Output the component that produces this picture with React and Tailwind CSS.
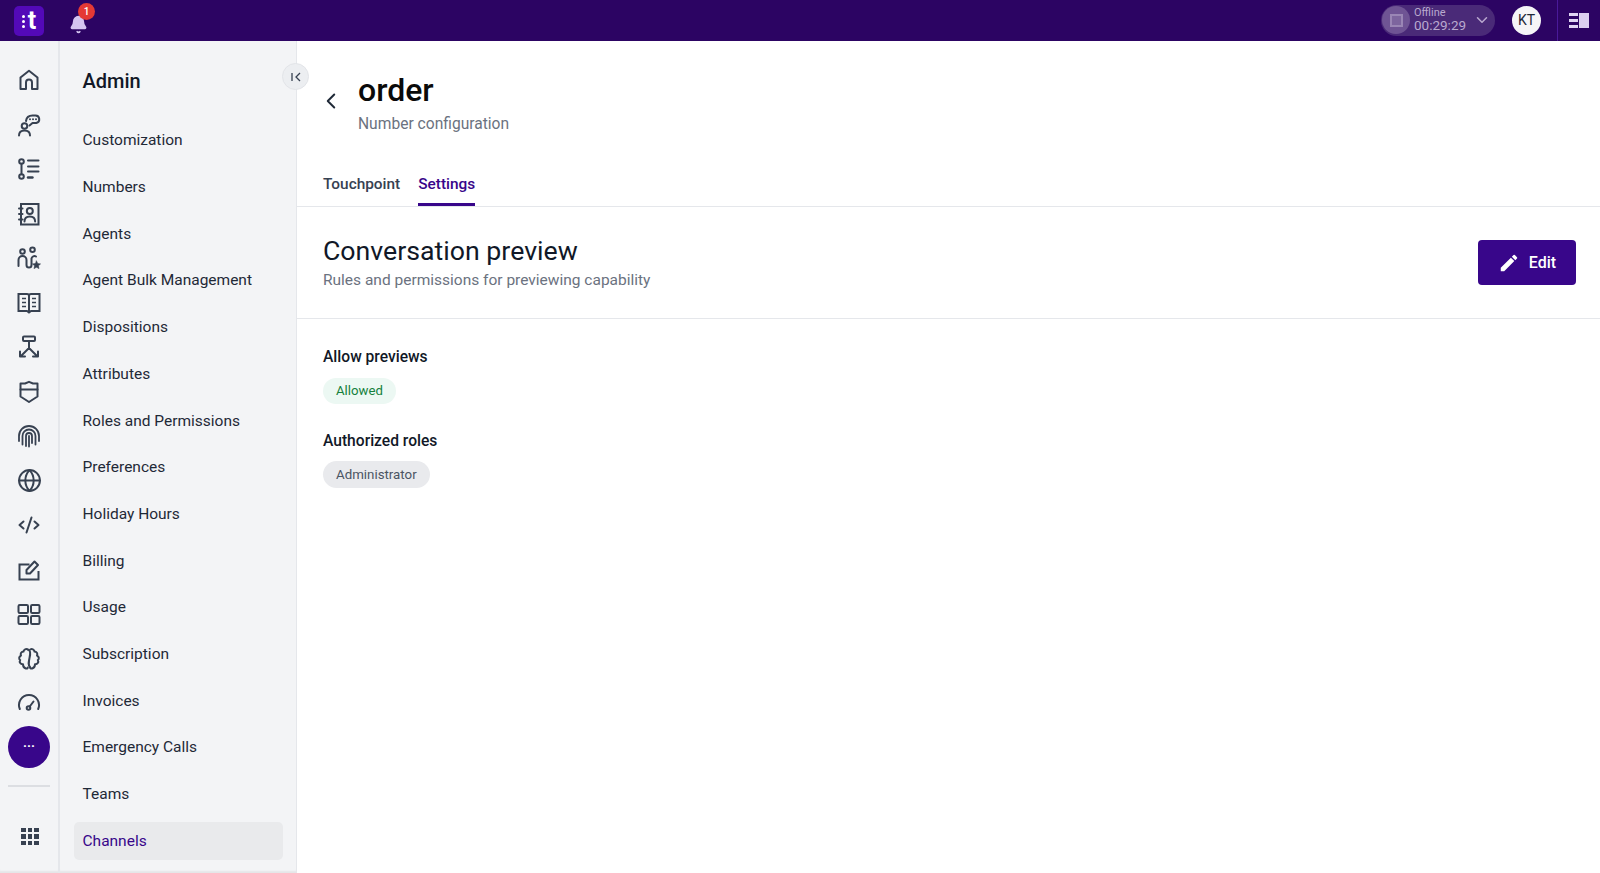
import React from 'react';
import { ChevronLeft, ChevronDown, Globe, Bell } from 'lucide-react';

const adminItems = [
  'Customization', 'Numbers', 'Agents', 'Agent Bulk Management', 'Dispositions', 'Attributes',
  'Roles and Permissions', 'Preferences', 'Holiday Hours', 'Billing', 'Usage', 'Subscription',
  'Invoices', 'Emergency Calls', 'Teams', 'Channels'
];

const Svg = ({ children }) => (
  <svg width="24" height="24" viewBox="0 0 24 24" fill="none" stroke="#374151" strokeWidth="2" strokeLinecap="round" strokeLinejoin="round">
    {children}
  </svg>
);

const railIcons = [
  <Svg key="home"><path d="M3.500 21V9.500L12 2.800l8.500 6.700V21h-5.500v-6.500a3 3 0 0 0-6 0V21z" /></Svg>,
  <Svg key="talk">
    <circle cx="7.500" cy="13" r="2.800" />
    <path d="M2 22.500c0-3.300 2.400-5 5.500-5s5.500 1.700 5.500 5" />
    <path d="M9 8C9.500 4.500 12 2.500 15.500 2.500H18.500a3.800 3.800 0 0 1 .8 7.500H15.500l-3 2.500" />
    <path d="M13 6.300h.01M16 6.300h.01M19 6.300h.01" />
  </Svg>,
  <Svg key="steps">
    <circle cx="4.500" cy="4.500" r="2.300" />
    <circle cx="4.500" cy="19.500" r="2.300" />
    <path d="M4.500 6.800v10.400M11 3.500h10.500M11 9.500h10.500M11 14.500h10.500" />
    <path d="M11 20.500h4.500" strokeWidth="2.400" />
  </Svg>,
  <Svg key="contacts">
    <path d="M4 2h17.500v20.500H4z" strokeLinejoin="miter" />
    <circle cx="12.800" cy="9" r="3" />
    <path d="M7.500 19.500c0-3.500 2.300-5 5.300-5s5.300 1.500 5.300 5M2 6.500h3.500M2 12h3.500M2 17.500h3.500" />
  </Svg>,
  <Svg key="agents">
    <circle cx="5.500" cy="5.500" r="2.300" />
    <circle cx="15.500" cy="3.800" r="2.300" />
    <path d="M1.500 20v-6a4 4 0 0 1 8 0v5a2.500 2.500 0 0 0 5 0v-6.500a3 3 0 0 1 4.500-2" />
    <path d="M19.500 15l1.200 2.600 2.800.3-2.100 1.900.6 2.800-2.500-1.400-2.500 1.400.6-2.800-2.100-1.900 2.800-.3z" fill="#374151" strokeWidth="0.6" />
  </Svg>,
  <Svg key="book">
    <path d="M1.500 3h8.500a2 2 0 0 1 2 1.500A2 2 0 0 1 14 3h8.500v17H14l-2 1.500-2-1.500H1.500zM12 4.500V20" strokeLinejoin="miter" />
    <path d="M5 7.500h4M5 11.500h4M5 15.500h4M15 7.500h4M15 11.500h4M15 15.500h4" strokeWidth="1.500" strokeLinecap="butt" />
  </Svg>,
  <Svg key="route">
    <rect x="6" y="1.500" width="12" height="4.500" rx="1" />
    <path d="M12 6v7l-8.500 8.500M12 13l8.500 8.500M3 16.500v5h5M21 16.500v5h-5" />
  </Svg>,
  <Svg key="shield">
    <path d="M3.500 3.500H8L12 1.800 16 3.500h4.500V16.500L12 22l-8.500-5.500z" />
    <path d="M3.500 9.500H20.500" />
  </Svg>,
  <Svg key="finger">
    <path d="M2 17v-5a10 10 0 0 1 20 0v5" strokeWidth="1.800" />
    <path d="M5.500 20.500V12a6.500 6.500 0 0 1 13 0v8.500" strokeWidth="1.800" />
    <path d="M9 22v-10a3 3 0 0 1 6 0v7" strokeWidth="1.800" />
    <path d="M12 12v10.500" strokeWidth="1.800" />
  </Svg>,
  <Globe key="globe" size={25} color="#374151" strokeWidth={1.900} />,
  <Svg key="code"><path d="M6.500 8.500 2.500 12l4 3.500M17.500 8.500l4 3.500-4 3.500M14.500 4.500l-5 15" /></Svg>,
  <Svg key="edit">
    <path d="M21.500 13v8.500h-19V6.500h10" strokeLinecap="butt" strokeLinejoin="miter" />
    <path d="M9.500 15.500v-3.500l8-8.500 3.500 3.500-8 8.500z" />
  </Svg>,
  <Svg key="apps">
    <rect x="1.500" y="3" width="9.500" height="8" rx="1.200" />
    <rect x="14" y="3" width="8.500" height="8" rx="1.200" />
    <rect x="1.500" y="14" width="9.500" height="8" rx="1.200" />
    <rect x="14" y="14" width="8.500" height="8" rx="1.200" />
  </Svg>,
  <Svg key="brain">
    <path d="M10.800 2.500C9 1.500 6.800 2.500 6.500 4.500 4.500 4.500 3 6.500 4 8.500 2 9.500 1.500 12 3.200 13 2 15 3.500 17.500 6 17.200c0 2 1 3.800 2.800 4.300 1 .2 2 0 2-1" />
    <path d="M13.200 2.500C15 1.500 17.200 2.500 17.500 4.500 19.500 4.500 21 6.500 20 8.500 22 9.500 22.500 12 20.800 13 22 15 20.500 17.500 18 17.200c0 2-1 3.800-2.800 4.300-1 .2-2 0-2-1" />
    <path d="M10.800 2.500c2.400.5 3 3 1.700 8.500-1 4.500-1.600 7 .7 9.500" />
  </Svg>,
  <Svg key="gauge">
    <path d="M2.800 18A10 10 0 1 1 21.200 18" />
    <circle cx="11.500" cy="17" r="1.800" />
    <path d="M12.700 15.500 16.500 10.500" />
  </Svg>,
];

export default function App() {
  return (
    <div className="flex h-[873px] flex-col overflow-hidden bg-white font-['Roboto',sans-serif]">
      <header className="flex h-[41px] shrink-0 items-center bg-[#2c0463]">
        <div className="ml-[14px] flex h-[30px] w-[30px] items-center justify-center rounded-[5px] bg-[#5309b8] pb-[1px] text-[25px] font-bold leading-none text-white">
          <span className="mr-[3px] flex flex-col gap-[2px] pt-[3px]">
            <i className="block h-[3px] w-[3px] rounded-full bg-white" />
            <i className="block h-[3px] w-[3px] rounded-full bg-white" />
            <i className="block h-[3px] w-[3px] rounded-full bg-white" />
          </span>
          t
        </div>
        <div className="relative ml-[25px] h-[24px] w-[20px]">
          <Bell size={19} fill="#d5c5f0" color="#d5c5f0" className="mt-[6px]" />
          <span className="absolute -top-[6px] left-[9px] flex h-[17px] w-[17px] items-center justify-center rounded-full bg-[#e53935] text-[10px] font-medium text-white">1</span>
        </div>
        <div className="ml-auto flex h-[31px] w-[114px] items-center rounded-full bg-[#4a2a78] pb-[1px] pl-[1px]">
          <div className="flex h-[28px] w-[28px] items-center justify-center rounded-full bg-[#6f5494]">
            <div className="h-[13px] w-[13px] border-2 border-[#9a86b5] bg-[#7d659e]" />
          </div>
          <div className="ml-[4px] flex flex-col pb-[1px] text-[#b9a9cf]">
            <span className="text-[11px] leading-[11px]">Offline</span>
            <span className="text-[13.500px] leading-[15px]">00:29:29</span>
          </div>
          <ChevronDown size={18} color="#b9a9cf" className="ml-[7px]" />
        </div>
        <div className="ml-[17px] flex h-[29px] w-[29px] items-center justify-center rounded-full bg-[#f5f5f7] pb-[1px] text-[14px] text-[#1f2937]">KT</div>
        <div className="ml-[16px] flex h-[41px] w-[43px] items-center justify-center border-l border-[#4a1a99]">
          <div className="flex items-center gap-[1px] pr-[1px]">
            <div className="flex h-[15px] w-[9px] flex-col justify-between">
              <i className="block h-[3px] bg-[#e0d5f3]" />
              <i className="block h-[3px] bg-[#e0d5f3]" />
              <i className="block h-[3px] bg-[#e0d5f3]" />
            </div>
            <div className="h-[15px] w-[10px] bg-[#dcd0f0]" />
          </div>
        </div>
      </header>

      <div className="flex min-h-0 flex-1">
        <nav className="flex w-[60px] shrink-0 flex-col items-center border-r-2 border-[#e5e7eb] bg-[#f3f4f6] pt-[17px] shadow-[inset_0_-3px_2px_-1px_rgba(0,0,0,0.06)]">
          {railIcons.map((icon) => (
            <div key={icon.key} className="flex h-[44.500px] w-full shrink-0 items-center justify-center">{icon}</div>
          ))}
          <div className="flex h-[42px] w-[42px] shrink-0 items-center justify-center rounded-full bg-[#38068a] pb-[3px] text-[13px] font-bold leading-none text-white">···</div>
          <div className="mt-[17px] h-[2px] w-[42px] shrink-0 bg-[#dcdee2]" />
          <div className="ml-[2px] mt-[41px] grid w-[18px] shrink-0 grid-cols-3 gap-[1.900px]">
            {[...Array(9).keys()].map((n) => (
              <i key={n} className="block h-[4.700px] w-[4.700px] bg-[#374151]" />
            ))}
          </div>
        </nav>

        <aside className="relative flex w-[237px] shrink-0 flex-col border-r border-[#e5e7eb] bg-[#f3f4f6] pl-[14px] pr-[13px] shadow-[inset_0_-3px_2px_-1px_rgba(0,0,0,0.06)]">
          <h2 className="mb-[27px] mt-[26px] pl-[8.500px] text-[20px] font-medium leading-[28px] text-[#111827]">Admin</h2>
          <ul className="flex flex-col gap-[8.700px]">
            {adminItems.map((item) => (
              <li
                key={item}
                className={`flex h-[38px] shrink-0 items-center rounded-[5px] pl-[8.500px] text-[15.500px] ${item === 'Channels' ? 'bg-[#e9eaec] text-[#38068a]' : 'text-[#1f2937]'}`}
              >
                {item}
              </li>
            ))}
          </ul>
          <button className="absolute -right-[13px] top-[22px] flex h-[27px] w-[27px] items-center justify-center rounded-full border border-[#e2e4e8] bg-[#eceef1]">
            <svg width="12" height="12" viewBox="0 0 12 12" fill="none" stroke="#374151" strokeWidth="1.300">
              <path d="M2 2v8M10 2 6 6l4 4" />
            </svg>
          </button>
        </aside>

        <main className="min-w-0 flex-1">
          <div className="flex items-start pl-[26px] pt-[30px]">
            <ChevronLeft size={26} color="#1f2937" strokeWidth={1.800} className="mt-[17px] -ml-[5px] mr-[14px]" />
            <div>
              <h1 className="text-[32px] font-medium leading-[38px] text-[#0a0a0a]">order</h1>
              <p className="mt-[3px] text-[15.600px] leading-[24px] text-[#6b7280]">Number configuration</p>
            </div>
          </div>
          <div className="mt-[25px] flex h-[46px] gap-[18px] border-b border-[#e5e7eb] pl-[26px]">
            <span className="pt-[12px] text-[15.400px] font-medium text-[#374151]">Touchpoint</span>
            <span className="h-[45px] border-b-[3px] border-[#38068a] pt-[12px] text-[15.400px] font-medium text-[#38068a]">Settings</span>
          </div>
          <section className="flex h-[112px] items-center justify-between border-b border-[#e5e7eb] pl-[26px] pr-[24px]">
            <div>
              <h2 className="text-[26.700px] leading-[34px] text-[#111827]">Conversation preview</h2>
              <p className="text-[15.500px] leading-[24px] text-[#6b7280]">Rules and permissions for previewing capability</p>
            </div>
            <button className="flex h-[45px] w-[98px] items-center justify-center gap-[9px] rounded-[4px] bg-[#38068a] text-[16px] font-medium text-white">
              <svg width="22" height="22" viewBox="0 0 24 24" fill="#fff">
                <path d="M3 17.250V21h3.750L17.810 9.940l-3.750-3.750zM20.710 7.040a1 1 0 0 0 0-1.410l-2.340-2.340a1 1 0 0 0-1.410 0l-1.830 1.830 3.750 3.750z" />
              </svg>
              Edit
            </button>
          </section>
          <div className="pl-[26px] pt-[27px]">
            <h3 className="text-[15.600px] font-medium leading-[22px] text-[#111827]">Allow previews</h3>
            <span className="mt-[10px] inline-flex h-[26px] items-center rounded-full bg-[#ecf8f3] px-[13px] text-[13.200px] text-[#15803d]">Allowed</span>
            <h3 className="mt-[26px] text-[15.600px] font-medium leading-[22px] text-[#111827]">Authorized roles</h3>
            <div>
              <span className="mt-[9px] inline-flex h-[27px] items-center rounded-full bg-[#e9eaed] px-[13px] text-[13.300px] text-[#4b5563]">Administrator</span>
            </div>
          </div>
        </main>
      </div>
    </div>
  );
}
